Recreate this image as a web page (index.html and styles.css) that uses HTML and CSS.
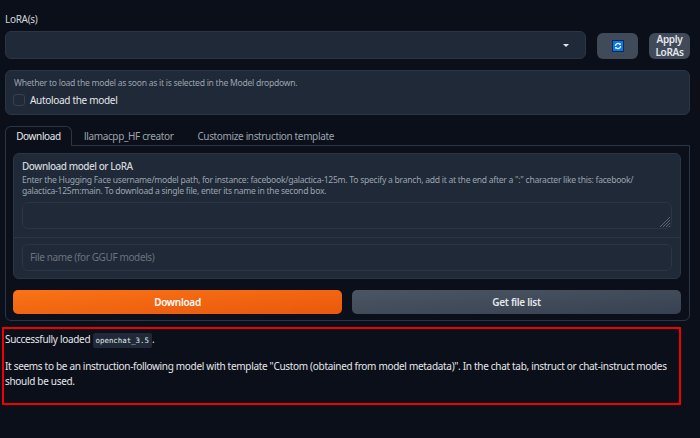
FILE: index.html
```html
<!DOCTYPE html>
<html lang="en">
<head>
    <meta charset="UTF-8">
    <title>Model</title>
    <link rel="stylesheet" href="styles.css">
</head>
<body>
    <div class="label">LoRA(s)</div>
    <div class="lora-row">
        <div class="dropdown"><span class="caret"></span></div>
        <button class="tool-btn refresh-btn">
            <svg class="refresh-icon" viewBox="0 0 12 12" width="12" height="12">
                <rect width="12" height="12" fill="#0b2a55"/>
                <rect x="1" y="1" width="10" height="10" fill="#0a78e8"/>
                <path d="M3.4 6a2.6 2.6 0 0 1 4.6-1.7M8.6 6a2.6 2.6 0 0 1-4.6 1.7" fill="none" stroke="#e8f2ff" stroke-width="1.3"/>
                <path d="M8.9 2.9v2.2H6.7zM3.1 9.1V6.9h2.2z" fill="#e8f2ff"/>
            </svg>
        </button>
        <button class="tool-btn apply-btn">Apply LoRAs</button>
    </div>

    <div class="panel autoload">
        <div class="info">Whether to load the model as soon as it is selected in the Model dropdown.</div>
        <label class="check"><span class="box"></span>Autoload the model</label>
    </div>

    <div class="tabs">
        <div class="tab active">Download</div>
        <div class="tab">llamacpp_HF creator</div>
        <div class="tab">Customize instruction template</div>
    </div>
    <div class="tab-body">
        <div class="panel form">
            <div class="form-top">
                <div class="form-title">Download model or LoRA</div>
                <div class="info">Enter the Hugging Face username/model path, for instance: facebook/galactica-125m. To specify a branch, add it at the end after a ":" character like this: facebook/<br>galactica-125m:main. To download a single file, enter its name in the second box.</div>
                <div class="field model-field">
                    <svg class="grip" viewBox="0 0 12 12" width="12" height="12">
                        <path d="M1 11 11 1M4 11l7-7M7 11l4-4M10 11l1-1" stroke="#6b7280" stroke-width="0.8"/>
                    </svg>
                </div>
            </div>
            <div class="form-bottom">
                <div class="field">File name (for GGUF models)</div>
            </div>
        </div>
        <div class="actions">
            <button class="action primary">Download</button>
            <button class="action secondary">Get file list</button>
        </div>
    </div>

    <div class="status">
        <p>Successfully loaded <code>openchat_3.5</code>.</p>
        <p>It seems to be an instruction-following model with template "Custom (obtained from model metadata)". In the chat tab, instruct or chat-instruct modes should be used.</p>
    </div>
</body>
</html>
```

FILE: styles.css
```css
* {
    box-sizing: border-box;
}
body {
    margin: 0;
    padding: 13px 10px 0 5px;
    background: #0b0f19;
    color: #e5e7eb;
    font-family: 'Noto Sans', sans-serif;
    font-size: 10px;
    letter-spacing: -0.31px;
    overflow: hidden;
}
.label {
    height: 18px;
    line-height: 13px;
    color: #d1d5db;
}
.lora-row {
    display: flex;
    align-items: flex-start;
    gap: 11px;
    height: 28px;
}
.dropdown {
    flex: 1;
    height: 28px;
    position: relative;
    background: #1f2937;
    border: 1px solid #2c3545;
    border-radius: 6px;
}
.caret {
    position: absolute;
    right: 16px;
    top: 12px;
    border-left: 3px solid transparent;
    border-right: 3px solid transparent;
    border-top: 3px solid #e5e7eb;
}
.tool-btn {
    width: 41px;
    height: 26px;
    margin-top: 2px;
    padding: 0;
    border: 0;
    border-radius: 6px;
    background: #414a59;
    color: #e5e7eb;
    font-family: inherit;
    font-size: 10px;
    letter-spacing: -0.3px;
    font-weight: 600;
    line-height: 13px;
    display: flex;
    align-items: center;
    justify-content: center;
    flex: none;
}
.refresh-icon {
    display: block;
}
.panel {
    background: #1f2937;
    border: 1px solid #2c3545;
    border-radius: 6px;
}
.autoload {
    height: 45px;
    margin-top: 11px;
    padding: 7px 8px 0;
}
.info {
    color: #9ca3af;
    font-size: 8.6px;
    letter-spacing: -0.275px;
    line-height: 11px;
}
.check {
    display: flex;
    align-items: center;
    gap: 5px;
    margin-top: 4px;
    line-height: 14px;
}
.box {
    width: 12px;
    height: 12px;
    margin-left: -1px;
    background: #1f2937;
    border: 1px solid #374151;
    border-radius: 3px;
}
.tabs {
    display: flex;
    height: 20px;
    margin-top: 11px;
    position: relative;
    z-index: 1;
}
.tab {
    padding: 0 11px;
    line-height: 19px;
    color: #9ca3af;
    letter-spacing: -0.36px;
    border: 1px solid transparent;
    border-bottom: 0;
}
.tab.active {
    width: 67px;
    padding: 0;
    text-align: center;
    color: #e5e7eb;
    height: 20px;
    background: #0b0f19;
    border-color: #2c3545;
    border-radius: 6px 6px 0 0;
}
.tab-body {
    height: 176px;
    margin-top: -1px;
    padding: 7px 8px 0 7px;
    border: 1px solid #2c3545;
    border-radius: 0 0 6px 6px;
}
.form {
    height: 126px;
}
.form-top {
    height: 84px;
    padding: 6px 8px 0;
    border-bottom: 1px solid #2c3545;
}
.form-title {
    color: #d1d5db;
    font-weight: 500;
    letter-spacing: -0.47px;
    line-height: 13px;
    margin-bottom: 2px;
}
.form-bottom {
    padding: 6px 8px 0;
}
.field {
    height: 27px;
    padding-left: 7px;
    line-height: 25px;
    color: #6b7280;
    letter-spacing: -0.37px;
    background: #1f2937;
    border: 1px solid #2c3545;
    border-radius: 6px;
    position: relative;
}
.model-field {
    margin-top: 5px;
}
.grip {
    position: absolute;
    right: 0;
    bottom: 0;
}
.actions {
    display: flex;
    gap: 10px;
    margin-top: 11px;
}
.action {
    flex: 1;
    height: 24px;
    padding: 0;
    border: 0;
    border-radius: 5px;
    color: #fff;
    font-family: inherit;
    font-size: 10px;
    letter-spacing: -0.3px;
    font-weight: 600;
}
.primary {
    background: linear-gradient(to bottom right, #f97316, #ea580c);
}
.secondary {
    color: #e5e7eb;
    background: linear-gradient(to bottom right, #4b5563, #374151);
}
.status {
    width: 679px;
    height: 78px;
    margin: 6px 0 0 -3px;
    padding: 3px 0 0 1px;
    border: 2px solid #f00000;
}
.status p {
    margin: 0 0 11px;
    line-height: 15px;
}
code {
    font-family: 'DejaVu Sans Mono', monospace;
    font-size: 7.4px;
    letter-spacing: 0;
    padding: 3px 3px;
    background: #1f2937;
    border-radius: 2px;
}
```
